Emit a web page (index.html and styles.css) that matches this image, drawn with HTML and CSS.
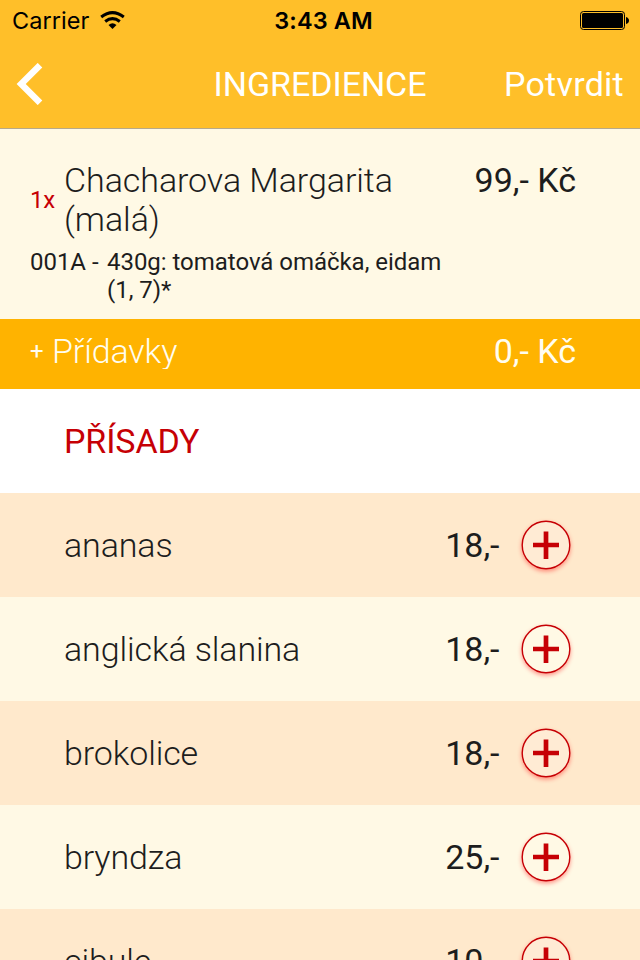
FILE: index.html
```html
<!DOCTYPE html>
<html lang="cs"><head><meta charset="utf-8"><title>Ingredience</title><link rel="stylesheet" href="styles.css"></head>
<body><main class="screen">
<header class="top">
<div class="status"><div class="carrier"><span>Carrier</span><svg class="wifi" width="25" height="18" viewBox="0 0 25 18" fill="none" stroke="#000" stroke-width="3"><path d="M1.200 6Q12.500-2.800 23.800 6M5.200 10.500Q12.500 4.800 19.800 10.500"/><path d="M12.500 18L8.500 14Q12.500 10.500 16.500 14Z" fill="#000" stroke="none"/></svg></div><time>3:43 AM</time><svg class="battery" width="49" height="20" viewBox="0 0 49 20"><rect x=".5" y=".5" width="44" height="18" rx="3" fill="none" stroke="#000"/><rect x="2" y="2" width="41" height="15" rx="1.500"/><path d="M46 6q3 1 3 3.500t-3 3.500z"/></svg></div>
<nav class="nav"><svg width="28" height="42" viewBox="0 0 28 42" fill="none" stroke="#fff" stroke-width="6.500"><path d="M24 2.200L5.200 21L24 39.800"/></svg><h1>INGREDIENCE</h1><span class="confirm">Potvrdit</span></nav>
</header>
<section class="product"><span class="qty">1x</span><h2>Chacharova Margarita<br>(malá)</h2><span class="price">99,- Kč</span><div class="detail"><span class="code">001A -</span><p>430g: tomatová omáčka, eidam<br>(1, 7)*</p></div></section>
<section class="extras"><span class="plus">+</span><span class="label">Přídavky</span><span class="price">0,- Kč</span></section>
<h2 class="heading">PŘÍSADY</h2>
<ul class="list">
<li><span class="name">ananas</span><span class="cost">18,-</span><svg class="add" viewBox="0 0 50 50"><circle cx="25" cy="25" r="23.800"/><path d="M25 11.500V39M12 25H38"/></svg></li>
<li><span class="name">anglická slanina</span><span class="cost">18,-</span><svg class="add" viewBox="0 0 50 50"><circle cx="25" cy="25" r="23.800"/><path d="M25 11.500V39M12 25H38"/></svg></li>
<li><span class="name">brokolice</span><span class="cost">18,-</span><svg class="add" viewBox="0 0 50 50"><circle cx="25" cy="25" r="23.800"/><path d="M25 11.500V39M12 25H38"/></svg></li>
<li><span class="name">bryndza</span><span class="cost">25,-</span><svg class="add" viewBox="0 0 50 50"><circle cx="25" cy="25" r="23.800"/><path d="M25 11.500V39M12 25H38"/></svg></li>
<li><span class="name">cibule</span><span class="cost">10,-</span><svg class="add" viewBox="0 0 50 50"><circle cx="25" cy="25" r="23.800"/><path d="M25 11.500V39M12 25H38"/></svg></li>
</ul></main></body></html>
```
FILE: styles.css
```css
* { box-sizing: border-box; }
body, h1, h2, p, ul { margin: 0; padding: 0; }
body { font-family: Roboto, sans-serif; color: #1d1d1d; }
.screen { width: 640px; height: 960px; overflow: hidden; background: #fff9e5; }
.top { height: 129px; background: #ffbf29; border-bottom: 1px solid #b7a98a; }
.status { height: 40px; padding: 2px 11px 0 12px; display: grid; grid-template-columns: 1fr auto 1fr; align-items: center; color: #000; font: 23.5px/38px Inter, sans-serif; }
.carrier { display: flex; align-items: center; gap: 11px; letter-spacing: .05px; }
.wifi { margin-top: -2px; }
.status time { font-weight: 600; padding-left: 6px; letter-spacing: .1px; }
.battery { justify-self: end; margin-top: -1px; }
.nav { height: 88px; padding: 0 16px; display: grid; grid-template-columns: 1fr auto 1fr; align-items: center; color: #fff; }
.nav h1 { font-size: 34px; font-weight: 400; letter-spacing: -.06px; }
.confirm { font-size: 34px; justify-self: end; letter-spacing: .25px; }
.product { height: 190px; padding: 32px 64px 0 30px; display: grid; grid-template: 78px 1fr / 34px 1fr auto; }
.product h2 { font-size: 34px; font-weight: 300; line-height: 39px; letter-spacing: -.06px; }
.qty { align-self: center; font-size: 24px; color: #c60005; letter-spacing: -.3px; }
.price { font-size: 34px; line-height: 39px; }
.detail { grid-column: 1 / 4; display: flex; padding-top: 9px; font-size: 24px; line-height: 28px; letter-spacing: -.03px; }
.code { width: 77px; }
.extras { height: 70px; padding: 0 64px 6px 30px; display: flex; align-items: center; color: #fffdf0; background: #ffb300; }
.plus { width: 22px; font-size: 24px; }
.label { flex: 1; height: 36px; overflow: hidden; font-size: 34px; font-weight: 300; line-height: 36px; letter-spacing: -.1px; }
.heading { height: 104px; padding-left: 64px; line-height: 104px; background: #fff; color: #c60005; font-size: 34px; font-weight: 400; letter-spacing: -.1px; }
.list { list-style: none; }
.list li { height: 104px; padding: 0 69px 0 64px; display: flex; align-items: center; font-size: 34px; }
.list li:nth-child(odd) { background: #ffe9cc; }
.name { flex: 1; font-weight: 300; letter-spacing: -.12px; }
.cost { margin-right: 21.5px; }
.add { width: 50px; height: 50px; fill: #ffebd4; stroke: #c60005; stroke-width: 1.4; filter: drop-shadow(0 2.5px 2px #ff000066); }
.list li:nth-child(even) .add { fill: #fff9e5; }
.add path { stroke-width: 4.7; }
```
